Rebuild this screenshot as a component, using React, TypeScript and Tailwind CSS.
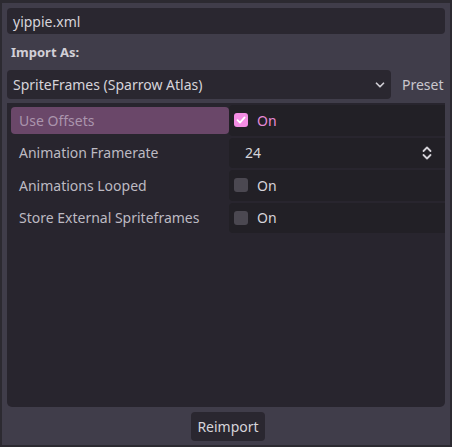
import { ChevronDown } from 'lucide-react'

const font = { fontFamily: '"Noto Sans", "Open Sans", sans-serif' }

function CheckBox({ checked }: { checked: boolean }) {
  if (!checked) {
    return <div className="w-[14px] h-[14px] rounded-[3px] bg-[#4b4851]" />
  }
  return (
    <div className="w-[14px] h-[14px] rounded-[3px] bg-[#f48de4] flex items-center justify-center">
      <svg width="10" height="10" viewBox="0 0 10 10" fill="none">
        <path d="M1.5 5.2 L4 7.6 L8.6 2.4" stroke="#ffffff" strokeWidth="1.8" strokeLinecap="round" strokeLinejoin="round" />
      </svg>
    </div>
  )
}

function SpinArrows() {
  return (
    <svg width="12" height="16" viewBox="0 0 12 16" fill="none">
      <path d="M2.5 6 L6 2.5 L9.5 6" stroke="#d4d2d8" strokeWidth="1.8" strokeLinecap="round" strokeLinejoin="round" />
      <path d="M2.5 10 L6 13.5 L9.5 10" stroke="#d4d2d8" strokeWidth="1.8" strokeLinecap="round" strokeLinejoin="round" />
    </svg>
  )
}

function Row({ label, active, children }: { label: string; active?: boolean; children: React.ReactNode }) {
  return (
    <div className="flex h-[32.5px]">
      <div className="w-[222px] py-[3px] pl-[4px]">
        <div
          className={`h-full flex items-center pl-[8px] rounded-[4px] text-[14px] ${
            active ? 'bg-[#6a4769] text-[#ab95ad]' : 'text-[#bdbac2]'
          }`}
        >
          {label}
        </div>
      </div>
      <div className="flex-1 my-[1px] bg-[#222026] rounded-tl-[4px] rounded-bl-[4px] flex items-center pl-[5px] pr-[12px]">
        {children}
      </div>
    </div>
  )
}

export default function App() {
  return (
    <div
      className="w-[452px] h-[447px] bg-[#403d4a] border-t-[3px] border-l-[2px] border-r-[2px] border-b-[2px] border-[#2c2a31] flex flex-col px-[5px] pt-[5px] text-[#d6d4da]"
      style={font}
    >
      <div className="h-[26px] rounded-[4px] bg-[#2a2730] flex items-center pl-[6px] text-[14px]">yippie.xml</div>

      <div className="mt-[8px] h-[22px] flex items-center pl-[4px] text-[13px] font-bold text-[#d2d0d7]">Import As:</div>

      <div className="mt-[6px] flex items-center h-[29px]">
        <div className="w-[384px] h-full rounded-[4px] bg-[#2a2730] flex items-center pl-[6px] pr-[4px] text-[14px] justify-between">
          <span>SpriteFrames (Sparrow Atlas)</span>
          <ChevronDown size={14} strokeWidth={3} className="text-[#cfcdd4]" />
        </div>
        <div className="ml-[11px] text-[14px] text-[#c9c7ce]">Preset</div>
      </div>

      <div className="mt-[4px] flex-1 bg-[#28252e] rounded-b-[5px] pt-[1px] flex flex-col">
        <Row label="Use Offsets" active>
          <CheckBox checked />
          <span className="ml-[9px] text-[14px] text-[#e68ad7]">On</span>
        </Row>
        <Row label="Animation Framerate">
          <span className="ml-[11px] text-[14px] flex-1">24</span>
          <SpinArrows />
        </Row>
        <Row label="Animations Looped">
          <CheckBox checked={false} />
          <span className="ml-[9px] text-[14px]">On</span>
        </Row>
        <Row label="Store External Spriteframes">
          <CheckBox checked={false} />
          <span className="ml-[9px] text-[14px]">On</span>
        </Row>
      </div>

      <div className="h-[38px] flex items-center justify-center pl-[4px]">
        <div className="h-[29px] px-[6px] rounded-[4px] bg-[#2a2730] flex items-center text-[14px] text-[#d6d4da]">Reimport</div>
      </div>
    </div>
  )
}
